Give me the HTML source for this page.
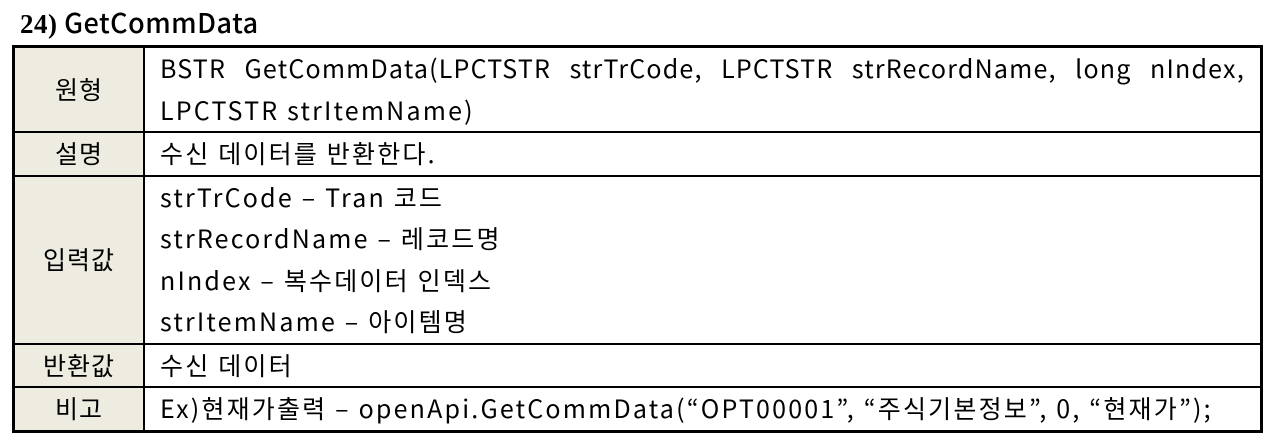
<!DOCTYPE html>
<html><head><meta charset="utf-8"><style>
body{margin:0;width:1271px;height:439px;background:#fff;position:relative;font-family:"Noto Sans CJK KR","NanumGothic",sans-serif;color:#000;overflow:hidden}
.t{position:absolute;left:20px;top:4px;font-size:27px;white-space:nowrap;line-height:36px;font-weight:500;letter-spacing:0.5px}
.t b{font-family:"Liberation Serif",serif;font-weight:bold}
table{position:absolute;left:12px;top:45px;width:1251px;border-collapse:collapse;border:3px solid #000;font-size:25px;letter-spacing:2.2px}
td{border:2px solid #000;padding:0 15px;line-height:41.5px;vertical-align:middle;white-space:nowrap}
td.h{width:128px;background:#eeece1;text-align:center;padding:0;letter-spacing:1px}
.j{text-align:justify;text-align-last:justify;display:block;letter-spacing:1.2px}
</style></head><body>
<div class="t"><b>24)</b> GetCommData</div>
<table>
<tr style="height:85px"><td class="h">원형</td><td style="white-space:normal"><span class="j">BSTR GetCommData(LPCTSTR strTrCode, LPCTSTR strRecordName, long nIndex,</span>LPCTSTR strItemName)</td></tr>
<tr style="height:43px"><td class="h">설명</td><td>수신 데이터를 반환한다.</td></tr>
<tr style="height:168px"><td class="h">입력값</td><td>strTrCode – Tran 코드<br>strRecordName – 레코드명<br>nIndex – 복수데이터 인덱스<br>strItemName – 아이템명</td></tr>
<tr style="height:43px"><td class="h">반환값</td><td>수신 데이터</td></tr>
<tr style="height:43px"><td class="h">비고</td><td>Ex)현재가출력 – openApi.GetCommData(“OPT00001”, “주식기본정보”, 0, “현재가”);</td></tr>
</table>
</body></html>
